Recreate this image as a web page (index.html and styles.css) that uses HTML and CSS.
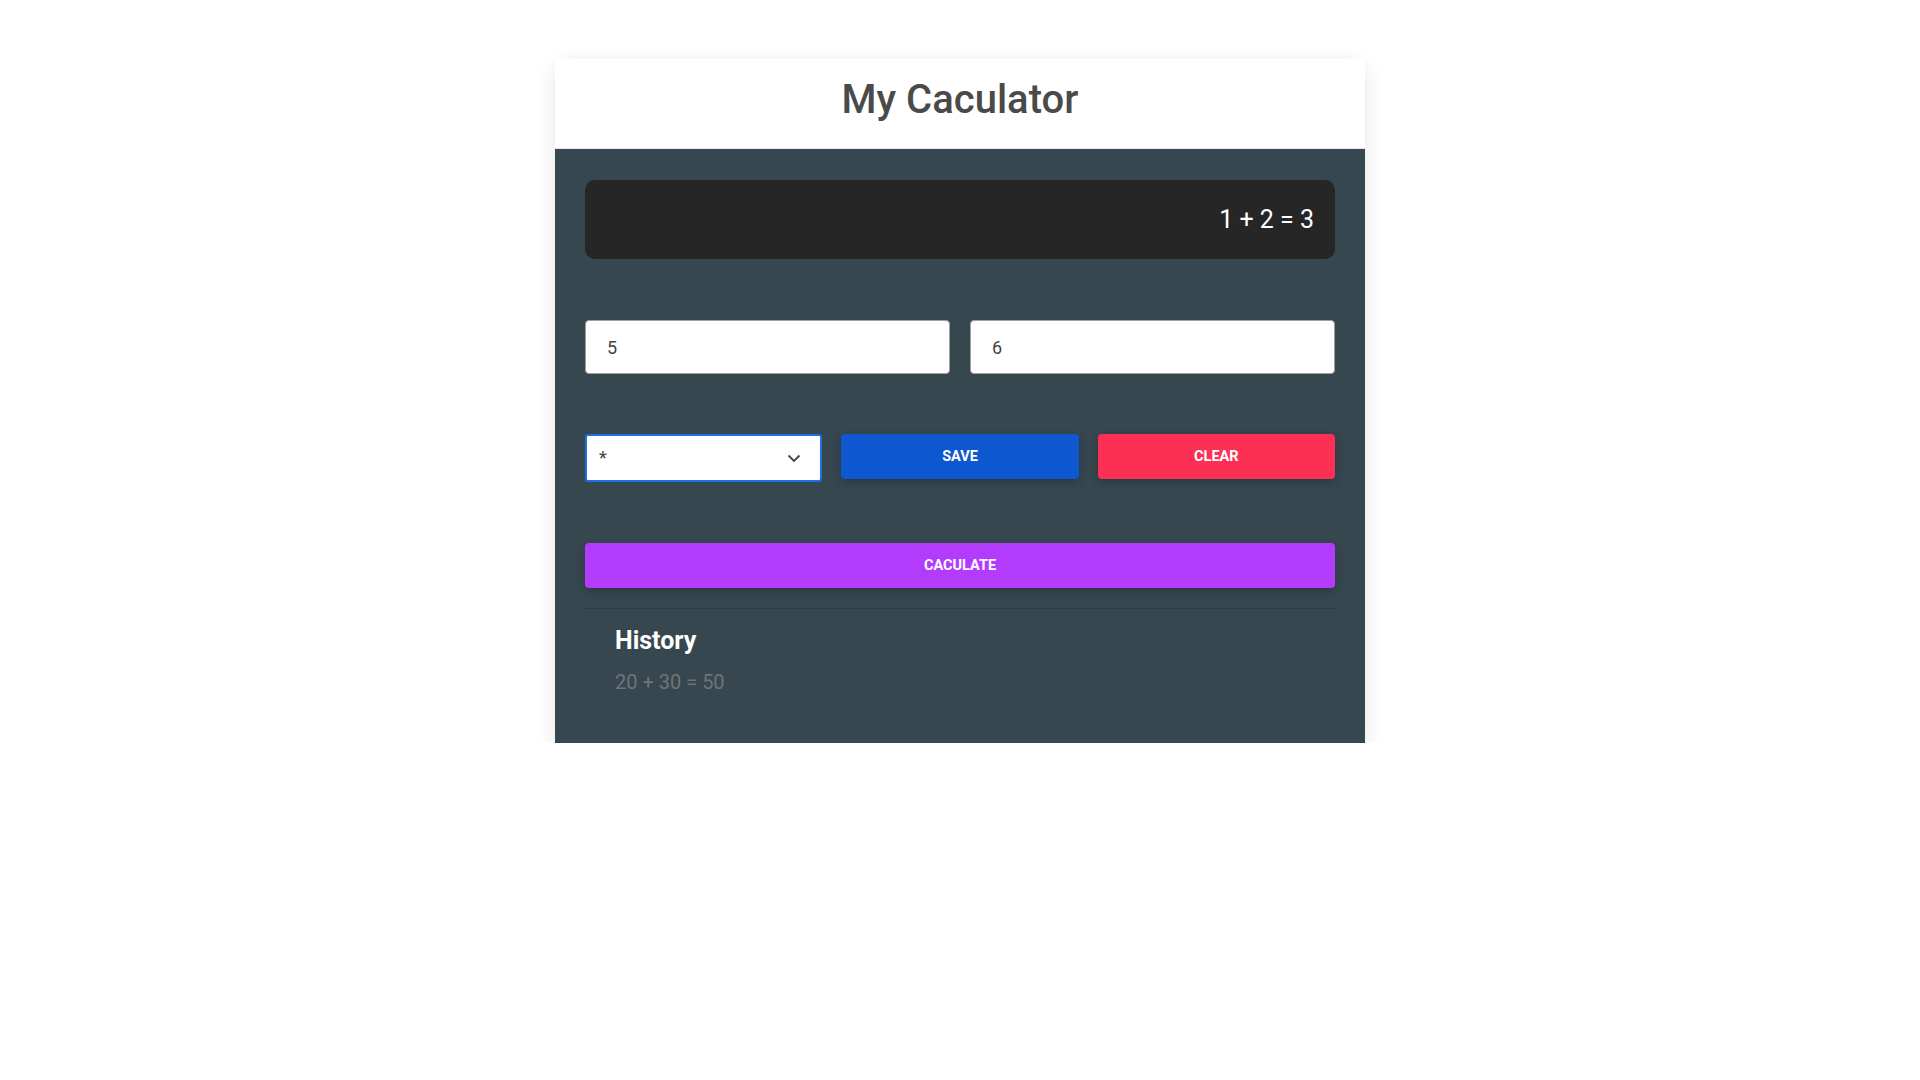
FILE: index.html
```html
<!DOCTYPE html>
<html lang="en">
<head>
<meta charset="utf-8">
<title>My Caculator</title>
<link rel="stylesheet" href="styles.css">
</head>
<body>
<div class="card">
  <header class="card-header">
    <h1 class="title">My Caculator</h1>
  </header>
  <main class="card-body">
    <div class="display">1 + 2 = 3</div>
    <div class="inputs">
      <input class="num-input" type="text" value="5">
      <input class="num-input" type="text" value="6">
    </div>
    <div class="controls">
      <div class="select">
        <span class="select-value">*</span>
        <svg class="chevron" width="14" height="9" viewBox="0 0 14 9"><path d="M1.5 1.5 L7 7 L12.5 1.5" fill="none" stroke="#444" stroke-width="1.8"/></svg>
      </div>
      <button class="btn btn-save">SAVE</button>
      <button class="btn btn-clear">CLEAR</button>
    </div>
    <button class="btn btn-calc">CACULATE</button>
    <hr class="divider">
    <section class="history">
      <h2 class="history-title">History</h2>
      <p class="history-item">20 + 30 = 50</p>
    </section>
  </main>
</div>
</body>
</html>
```
FILE: styles.css
```css
* { box-sizing: border-box; }
html, body { margin: 0; padding: 0; background: #fff; }
body { font-family: Roboto, "Liberation Sans", sans-serif; }

.card {
  width: 810px;
  margin: 59px auto 0;
  box-shadow: 0 6px 20px rgba(0,0,0,0.10);
}
.card-header {
  height: 90px;
  background: #fff;
  display: flex;
  align-items: center;
  justify-content: center;
  border-bottom: 1px solid #e6e6e6;
}
.title {
  margin: 0;
  font-size: 40px;
  font-weight: 500;
  color: #4a4a4a;
  position: relative;
  top: -4px;
}
.card-body {
  background: #37474f;
  padding: 31px 30px 49px;
}
.display {
  height: 79px;
  background: #262626;
  border-radius: 10px;
  display: flex;
  align-items: center;
  justify-content: flex-end;
  padding-right: 21px;
  color: #fff;
  font-size: 25px;
}
.inputs {
  margin-top: 61px;
  display: grid;
  grid-template-columns: 1fr 1fr;
  gap: 20px;
}
.num-input {
  height: 54px;
  border: 1px solid #9aa0a6;
  border-radius: 4px;
  background: #fff;
  padding: 0 21px;
  font-family: Roboto, "Liberation Sans", sans-serif;
  font-size: 18px;
  color: #444;
  outline: none;
}
.controls {
  margin-top: 60px;
  display: grid;
  grid-template-columns: 1fr 1fr 1fr;
  gap: 19px;
  align-items: start;
}
.select {
  height: 48px;
  border: 2px solid #1f6fe8;
  border-radius: 3px;
  background: #fff;
  display: flex;
  align-items: center;
  justify-content: space-between;
  padding: 0 19px 0 12px;
  color: #444;
  font-size: 18px;
}
.select-value { position: relative; top: -1px; }
.chevron { display: block; }
.btn {
  height: 45px;
  border: none;
  border-radius: 4px;
  color: #fff;
  font-family: Roboto, "Liberation Sans", sans-serif;
  font-weight: 700;
  font-size: 14.5px;
  box-shadow: 0 3px 8px rgba(0,0,0,0.25);
  cursor: pointer;
}
.btn-save { background: #0d57d0; }
.btn-clear { background: #fc2f55; }
.btn-calc {
  display: block;
  width: 100%;
  margin-top: 61px;
  background: #b23bfc;
}
.divider {
  margin: 20px 0 0;
  border: none;
  border-top: 1px solid rgba(0,0,0,0.15);
  height: 0;
}
.history {
  padding: 17px 0 0 30px;
}
.history-title {
  margin: 0;
  font-size: 25px;
  font-weight: 700;
  color: #fff;
}
.history-item {
  margin: 15px 0 0;
  font-size: 20px;
  color: #6e7478;
}
```
